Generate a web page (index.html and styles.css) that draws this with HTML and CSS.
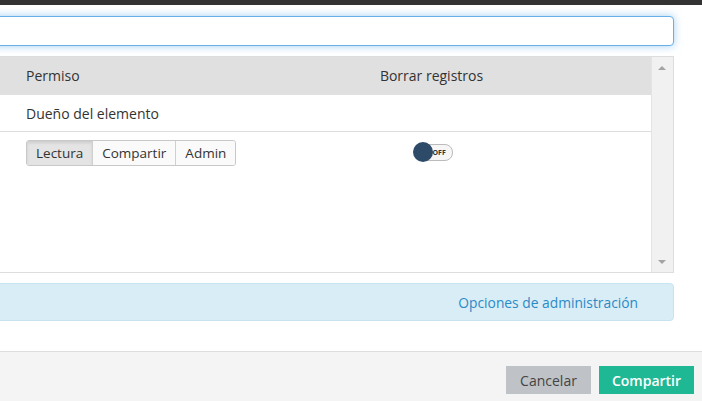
FILE: index.html
```html
<!DOCTYPE html>
<html lang="es">
<head>
<meta charset="utf-8">
<link rel="stylesheet" href="styles.css">
</head>
<body>
<div class="topbar"></div>
<div class="modal-body">
  <input class="search" type="text">
  <div class="table-box">
    <div class="table">
      <div class="row head">
        <div class="c1">Permiso</div>
        <div class="c2">Borrar registros</div>
      </div>
      <div class="row owner">
        <div class="c1">Dueño del elemento</div>
        <div class="c2"></div>
      </div>
      <div class="row perms">
        <div class="c1">
          <div class="btn-group">
            <span class="seg active">Lectura</span><span class="seg">Compartir</span><span class="seg">Admin</span>
          </div>
        </div>
        <div class="c2">
          <span class="toggle"><span class="knob"></span><span class="off">OFF</span></span>
        </div>
      </div>
    </div>
    <div class="scrollbar">
      <span class="arrow up"></span>
      <span class="arrow down"></span>
    </div>
  </div>
  <div class="alert">Opciones de administración</div>
</div>
<div class="footer">
  <span class="btn cancel">Cancelar</span>
  <span class="btn primary">Compartir</span>
</div>
</body>
</html>
```
FILE: styles.css
```css
html, body {
  margin: 0;
  padding: 0;
  background: #fff;
  font-family: "Open Sans", "DejaVu Sans", sans-serif;
  color: #333;
  font-size: 14px;
  width: 702px;
  height: 401px;
  overflow: hidden;
}
.topbar {
  height: 5px;
  background: #333;
}
.modal-body {
  margin-left: -20px;
  width: 694px;
  padding-top: 11px;
  display: flex;
  flex-direction: column;
}
.search {
  box-sizing: border-box;
  height: 30px;
  width: 694px;
  border: 1px solid #66afe9;
  border-radius: 4px;
  box-shadow: 0 0 8px rgba(102, 175, 233, 0.6);
  outline: none;
  margin: 0;
}
.table-box {
  margin-top: 10px;
  box-sizing: border-box;
  height: 217px;
  border: 1px solid #ddd;
  display: flex;
}
.table {
  flex: 1;
}
.row {
  display: grid;
  grid-template-columns: 231px 1fr;
  border-bottom: 1px solid #ddd;
}
.row .c1 {
  padding-left: 45px;
}
.row .c2 {
  text-align: center;
}
.head {
  background: #e0e0e0;
  height: 37px;
  align-items: center;
  border-bottom: 1px solid #e0e0e0;
}
.owner {
  height: 36px;
  align-items: center;
}
.perms {
  border-bottom: none;
  padding-top: 8px;
}
.btn-group {
  display: inline-flex;
  border: 1px solid #c8c8c8;
  border-radius: 3px;
  overflow: hidden;
  height: 24px;
  font-size: 13.5px;
}
.seg {
  display: flex;
  align-items: center;
  padding: 0 9px;
  background: #fafafa;
  border-left: 1px solid #d0d0d0;
  color: #333;
}
.seg:first-child {
  border-left: none;
}
.seg.active {
  background: #e4e4e4;
  box-shadow: inset 0 2px 3px rgba(0, 0, 0, 0.1);
}
.toggle {
  position: relative;
  display: inline-block;
  width: 32px;
  height: 15px;
  border: 1px solid #bbb;
  border-radius: 8px;
  background: #f6f6f6;
  margin-top: 4px;
  margin-left: 8px;
  vertical-align: top;
}
.knob {
  position: absolute;
  left: -7px;
  top: -3px;
  width: 20px;
  height: 20px;
  border-radius: 50%;
  background: #2d4a68;
}
.off {
  position: absolute;
  left: 13px;
  top: 3px;
  font-size: 7px;
  font-weight: 700;
  line-height: 9px;
  color: #333;
}
.scrollbar {
  width: 21px;
  background: #f1f1f1;
  border-left: 1px solid #e4e4e4;
  position: relative;
}
.arrow {
  position: absolute;
  left: 6px;
  width: 0;
  height: 0;
  border-left: 4px solid transparent;
  border-right: 4px solid transparent;
}
.arrow.up {
  top: 9px;
  border-bottom: 4px solid #a3a3a3;
}
.arrow.down {
  bottom: 8px;
  border-top: 4px solid #a3a3a3;
}
.alert {
  margin-top: 10px;
  box-sizing: border-box;
  height: 38px;
  background: #d9edf7;
  border: 1px solid #c5e4ef;
  border-radius: 4px;
  display: flex;
  align-items: center;
  justify-content: flex-end;
  padding-right: 35px;
  color: #2a8ac6;
  font-size: 13.8px;
}
.footer {
  margin-top: 30px;
  border-top: 1px solid #ddd;
  background: #f4f4f4;
  height: 50px;
  display: flex;
  justify-content: flex-end;
  align-items: flex-start;
  gap: 8px;
  padding-top: 14px;
  padding-right: 8px;
  box-sizing: border-box;
}
.btn {
  height: 28px;
  display: flex;
  align-items: center;
  justify-content: center;
  font-size: 14px;
}
.cancel {
  width: 85px;
  background: #bfc3c7;
  color: #444;
}
.primary {
  width: 95px;
  background: #1fb894;
  color: #fff;
  font-weight: 600;
}
```
